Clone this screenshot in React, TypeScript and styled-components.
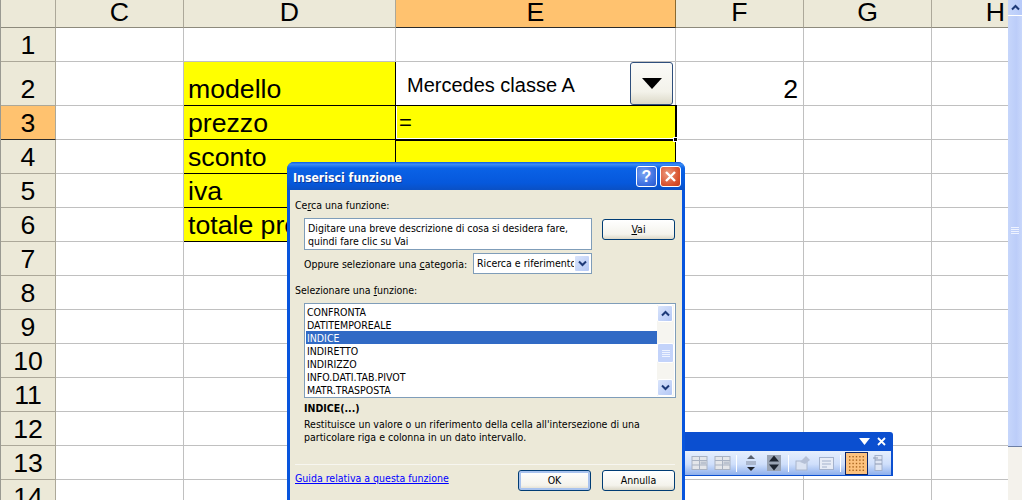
import React from "react";
import styled, { createGlobalStyle } from "styled-components";

const GlobalStyle = createGlobalStyle`
  html, body { margin: 0; padding: 0; background: #fff; overflow: hidden; }
  * { box-sizing: border-box; }
`;

const Page = styled.div`
  position: relative;
  width: 1024px;
  height: 500px;
  overflow: hidden;
  display: flex;
  background: #fff;
  font-family: "Liberation Sans", Arial, sans-serif;
  color: #000;
`;

const Sheet = styled.div`
  width: 1008px;
  height: 500px;
  overflow: hidden;
  display: grid;
  grid-template-columns: 55px 128px 212px 280px 128px 128px 128px;
  grid-template-rows: 28px 34px 44px 34px 34px 34px 34px 34px 34px 34px 34px 34px 34px 34px 34px;
  font-size: 26.67px;
  border-left: 1px solid #9a9a92;
`;

const ColHead = styled.div<{ $active?: boolean }>`
  background: ${(p) => (p.$active ? "#ffc26f" : "#ece9d8")};
  border-right: 1px solid ${(p) => (p.$active ? "#8a6a30" : "#aca899")};
  border-bottom: 1px solid ${(p) => (p.$active ? "#2b2b2b" : "#8d8a7c")};
  display: flex;
  align-items: center;
  justify-content: center;
  line-height: 24px;
  padding-bottom: 3px;
`;

const RowHead = styled.div<{ $active?: boolean }>`
  background: ${(p) => (p.$active ? "#ffc26f" : "#ece9d8")};
  border-right: 1px solid #aca899;
  border-bottom: 1px solid ${(p) => (p.$active ? "#2b2b2b" : "#aca899")};
  display: flex;
  align-items: ${(p) => (p.$active ? "center" : "flex-end")};
  justify-content: center;
  line-height: 32px;
`;

const Cell = styled.div<{ $yellow?: boolean; $right?: boolean }>`
  position: relative;
  background: ${(p) => (p.$yellow ? "#ffff00" : "#fff")};
  border-right: 1px solid ${(p) => (p.$yellow ? "#000" : "#c0c0c0")};
  border-bottom: 1px solid ${(p) => (p.$yellow ? "#000" : "#c0c0c0")};
  display: flex;
  align-items: flex-end;
  justify-content: ${(p) => (p.$right ? "flex-end" : "flex-start")};
  padding: 0 5px 0 4px;
  line-height: 31px;
  white-space: nowrap;
`;

const SelectedCell = styled(Cell)`
  outline: 1px solid #000;
  outline-offset: 0;
  box-shadow: inset 1px 0 0 #fff, inset 0 -1px 0 #fff;
  align-items: center;
  font-size: 22px;
  z-index: 1;
  padding-left: 3px;
`;

const Handle = styled.span`
  position: absolute;
  right: -3px;
  bottom: -3px;
  width: 5px;
  height: 5px;
  background: #000;
  border: 1px solid #fff;
`;

const ComboCell = styled(Cell)`
  font-size: 20px;
  line-height: 24px;
  align-items: center;
  padding: 2px 2px 0 11px;
  justify-content: space-between;
`;

const ComboButton = styled.div`
  width: 43px;
  height: 43px;
  margin-top: -3px;
  border: 1px solid #2f4f7c;
  border-radius: 3px;
  background: linear-gradient(180deg, #fbfbf8 0%, #f3f2ea 70%, #dcd9c8 100%);
  display: flex;
  align-items: center;
  justify-content: center;
`;

const VBar = styled.div`
  width: 14px;
  height: 500px;
  display: flex;
  flex-direction: column;
  margin-right: 2px;
  background: #f4f2ec;
`;

const VBarArrow = styled.div`
  height: 16px;
  background: linear-gradient(90deg, #c5d6fb, #b7cafa);
  border-bottom: 1px solid #fff;
  display: flex;
  align-items: center;
  justify-content: center;
`;

const VBarThumb = styled.div`
  height: 431px;
  background: linear-gradient(90deg, #c6d6fb, #bccdf9 60%, #c8d7fb);
  border-bottom: 1px solid #6d7fa5;
  display: flex;
  flex-direction: column;
  align-items: center;
  padding-top: 211px;
  gap: 1px;
`;

const GripLine = styled.span`
  width: 8px;
  height: 1px;
  background: #eef3ff;
`;

const Dialog = styled.div`
  position: absolute;
  left: 287px;
  top: 162px;
  width: 398px;
  height: 345px;
  background: #0855dd;
  border-radius: 7px 7px 0 0;
  padding: 0 3px 3px;
  display: flex;
  flex-direction: column;
  font-family: "DejaVu Sans Condensed", "DejaVu Sans", sans-serif;
  font-stretch: condensed;
  font-size: 10.5px;
  line-height: 13px;
  z-index: 5;
`;

const TitleBar = styled.div`
  height: 28px;
  margin: 0 -3px;
  padding: 0 4px 0 6px;
  border-radius: 7px 7px 0 0;
  background: linear-gradient(180deg, #0a5ae0 0%, #3b8cf5 8%, #0a62e6 22%, #0658dc 75%, #0a50c4 100%);
  display: flex;
  align-items: center;
  justify-content: space-between;
`;

const TitleText = styled.span`
  color: #fff;
  font-weight: 700;
  font-size: 12.2px;
  padding-top: 5px;
  text-shadow: 1px 1px 0 #0a3a9a;
`;

const TitleButtons = styled.div`
  display: flex;
  gap: 3px;
  padding-top: 1px;
`;

const CaptionButton = styled.div<{ $close?: boolean }>`
  width: 21px;
  height: 21px;
  border: 1px solid #fff;
  border-radius: 3px;
  background: ${(p) =>
    p.$close
      ? "radial-gradient(circle at 35% 35%, #ec9a80, #d9532f 65%, #c23c1c)"
      : "radial-gradient(circle at 35% 35%, #7aa4f2, #3b6ee0 65%, #2a58cc)"};
  color: #fff;
  font: 700 16px/19px "Liberation Sans", sans-serif;
  display: flex;
  align-items: center;
  justify-content: center;
`;

const Body = styled.div`
  flex: 1;
  background: #ece9d8;
  padding: 9px 7px 0 5px;
  display: flex;
  flex-direction: column;
`;

const Label = styled.div`
  color: #000;
  white-space: nowrap;
`;

const CategoryLabel = styled(Label)`
  padding-top: 2px;
`;

const SearchRow = styled.div`
  display: flex;
  justify-content: space-between;
  margin: 6px 0 0 9px;
`;

const SearchBox = styled.div`
  width: 288px;
  height: 32px;
  background: #fff;
  border: 1px solid #7f9db9;
  padding: 3px 3px;
`;

const XpButton = styled.div<{ $default?: boolean }>`
  width: 73px;
  height: 21px;
  border: 1px solid #003c74;
  border-radius: 3px;
  background: linear-gradient(180deg, #fff 0%, #f4f3ec 75%, #dcd8c8 100%);
  box-shadow: ${(p) => (p.$default ? "inset 0 0 0 2px #a9c3ee" : "none")};
  display: flex;
  align-items: center;
  justify-content: center;
`;

const VaiButton = styled(XpButton)`
  margin-top: 1px;
`;

const CategoryRow = styled.div`
  display: flex;
  align-items: center;
  justify-content: space-between;
  width: 288px;
  margin: 3px 0 0 9px;
`;

const SelectBox = styled.div`
  width: 119px;
  height: 21px;
  background: #fff;
  border: 1px solid #7f9db9;
  padding: 1px;
  display: flex;
  align-items: center;
  justify-content: space-between;
`;

const SelectValue = styled.div`
  flex: 1;
  overflow: hidden;
  white-space: nowrap;
  padding-left: 2px;
`;

const ArrowButton = styled.div`
  width: 16px;
  height: 17px;
  border-radius: 2px;
  background: linear-gradient(135deg, #d9e4fb, #b4c8f6);
  border: 1px solid #fff;
  display: flex;
  align-items: center;
  justify-content: center;
  flex: none;
`;

const SectionLabel = styled(Label)`
  margin-top: 10px;
`;

const ListBox = styled.div`
  margin: 6px 0 0 9px;
  height: 95px;
  width: 372px;
  background: #fff;
  border: 1px solid #7f9db9;
  padding: 1px;
  display: flex;
  justify-content: space-between;
`;

const Items = styled.div`
  width: 351px;
`;

const Item = styled.div<{ $selected?: boolean }>`
  height: 13px;
  padding: 1px 0 0 1px;
  white-space: nowrap;
  background: ${(p) => (p.$selected ? "#316ac5" : "transparent")};
  color: ${(p) => (p.$selected ? "#fff" : "#000")};
`;

const ListScroll = styled.div`
  width: 17px;
  display: flex;
  flex-direction: column;
  background: #f6f5f0;
`;

const ListThumb = styled.div`
  height: 20px;
  margin-top: 21px;
  border: 1px solid #fff;
  border-radius: 2px;
  background: #c3d3fa;
  display: flex;
  flex-direction: column;
  align-items: center;
  justify-content: center;
  gap: 1px;
`;

const ListSpacer = styled.div`
  flex: 1;
`;

const FuncName = styled.div`
  margin: 4px 0 0 9px;
  font-weight: 700;
`;

const FuncDesc = styled.div`
  margin: 3px 0 0 9px;
`;

const Separator = styled.div`
  height: 1px;
  margin-top: 20px;
  background: #d0cdbc;
  border-bottom: 1px solid #f7f6f0;
`;

const Footer = styled.div`
  display: flex;
  align-items: flex-start;
  margin-top: 5px;
`;

const HelpLink = styled.a`
  color: #0000ff;
  text-decoration: underline;
  margin-right: auto;
  padding-top: 2px;
  white-space: nowrap;
`;

const FooterButtons = styled.div`
  display: flex;
  gap: 11px;
`;

const FloatBar = styled.div`
  position: absolute;
  left: 670px;
  top: 432px;
  width: 223px;
  height: 44px;
  background: #0b4fd0;
  border-radius: 3px 3px 0 0;
  padding: 0 2px 1px;
  display: flex;
  flex-direction: column;
  z-index: 3;
`;

const FloatTitle = styled.div`
  height: 19px;
  display: flex;
  align-items: center;
  justify-content: flex-end;
  gap: 7px;
  padding-right: 5px;
`;

const FloatBody = styled.div`
  flex: 1;
  background: linear-gradient(180deg, #e6effd 0%, #cfdffb 55%, #8fb0ec 100%);
  display: flex;
  align-items: center;
  justify-content: flex-end;
  padding-right: 3px;
  gap: 3px;
`;

const ToolSep = styled.span`
  width: 1px;
  height: 17px;
  margin: 0 1px;
  background: #8aa8e0;
  border-right: 1px solid #fff;
`;

const ToolButton = styled.div<{ $on?: boolean }>`
  width: ${(p) => (p.$on ? 23 : 20)}px;
  height: ${(p) => (p.$on ? 23 : 20)}px;
  margin-right: ${(p) => (p.$on ? -3 : 0)}px;
  display: flex;
  align-items: center;
  justify-content: center;
  background: ${(p) => (p.$on ? "#fdc27e" : "transparent")};
  border: ${(p) => (p.$on ? "1px solid #0a246a" : "none")};
`;

const colLetters = ["C", "D", "E", "F", "G", "H"];
const labels: Record<number, string> = { 2: "modello", 3: "prezzo", 4: "sconto", 5: "iva", 6: "totale prezzo" };
const functions = ["CONFRONTA", "DATITEMPOREALE", "INDICE", "INDIRETTO", "INDIRIZZO", "INFO.DATI.TAB.PIVOT", "MATR.TRASPOSTA"];
const rows = Array.from({ length: 14 }, (_, i) => i + 1);

const Chevron = ({ up, color = "#1d3a78" }: { up?: boolean; color?: string }) => (
  <svg width="9" height="7" viewBox="0 0 9 7">
    <path d={up ? "M1 5.5 L4.5 2 L8 5.5" : "M1 1.5 L4.5 5 L8 1.5"} fill="none" stroke={color} strokeWidth="2" />
  </svg>
);

const Grip = () => (
  <>
    <GripLine />
    <GripLine />
    <GripLine />
    <GripLine />
  </>
);

const GhostTable = () => (
  <svg width="17" height="16" viewBox="0 0 17 16">
    <rect x="1" y="1.5" width="15" height="13" fill="#e4e6ea" stroke="#a9b2c2" />
    <path d="M1 5.5H16M1 10H16M8.5 1.5V14.5" stroke="#a9b2c2" fill="none" />
    <rect x="9.5" y="6.5" width="6" height="3" fill="#bcc3d0" />
  </svg>
);

const ToolIcons = () => (
  <>
    <ToolButton><GhostTable /></ToolButton>
    <ToolButton><GhostTable /></ToolButton>
    <ToolSep />
    <ToolButton>
      <svg width="14" height="18" viewBox="0 0 14 18">
        <path d="M7 1 L11 5 H3 Z" fill="#59616e" />
        <rect x="2" y="7" width="10" height="4" fill="#aab6cc" />
        <path d="M7 17 L3 13 H11 Z" fill="#20242c" />
      </svg>
    </ToolButton>
    <ToolButton>
      <svg width="16" height="18" viewBox="0 0 16 18">
        <rect x="1" y="1" width="14" height="16" fill="#9aa4b4" />
        <path d="M8 1.5 L13 7.5 H3 Z" fill="#1d2430" />
        <path d="M8 16.5 L3 10.5 H13 Z" fill="#1d2430" />
      </svg>
    </ToolButton>
    <ToolSep />
    <ToolButton>
      <svg width="18" height="16" viewBox="0 0 18 16">
        <rect x="2" y="6" width="11" height="9" fill="#dbe3f2" stroke="#aab6cc" />
        <path d="M6 7 L12 1 L16 5 L11 9 Z" fill="#b5c0d6" />
      </svg>
    </ToolButton>
    <ToolButton>
      <svg width="17" height="15" viewBox="0 0 17 15">
        <rect x="1.5" y="1.5" width="14" height="12" fill="#e7ecf6" stroke="#a4b2cc" />
        <path d="M4 5H13M4 8H13M4 11H9" stroke="#a4b2cc" />
      </svg>
    </ToolButton>
    <ToolSep />
    <ToolButton $on>
      <svg width="17" height="17" viewBox="0 0 17 17">
        {Array.from({ length: 25 }, (_, i) => (
          <rect key={i} x={1 + (i % 5) * 3.4} y={1 + Math.floor(i / 5) * 3.4} width="1.4" height="1.4" fill="#a8641e" />
        ))}
      </svg>
    </ToolButton>
    <ToolButton>
      <svg width="12" height="18" viewBox="0 0 12 18">
        <rect x="3" y="1.5" width="7" height="15" fill="#dfe6f4" stroke="#a4b2cc" />
        <path d="M3 6H10M3 10H10M1 4 H6" stroke="#8c99b3" fill="none" />
      </svg>
    </ToolButton>
  </>
);

export default function App() {
  return (
    <Page>
      <GlobalStyle />
      <Sheet>
        <ColHead />
        {colLetters.map((c) => (
          <ColHead key={c} $active={c === "E"}>{c}</ColHead>
        ))}
        {rows.map((r) => (
          <React.Fragment key={r}>
            <RowHead $active={r === 3}>{r}</RowHead>
            <Cell />
            <Cell $yellow={r >= 2 && r <= 6}>{labels[r]}</Cell>
            {r === 2 ? (
              <ComboCell>
                Mercedes classe A
                <ComboButton>
                  <svg width="20" height="11" viewBox="0 0 20 11">
                    <path d="M0 0H20L10 11Z" fill="#000" />
                  </svg>
                </ComboButton>
              </ComboCell>
            ) : r === 3 ? (
              <SelectedCell $yellow>
                =<Handle />
              </SelectedCell>
            ) : (
              <Cell $yellow={r >= 4 && r <= 6} />
            )}
            <Cell $right>{r === 2 ? "2" : ""}</Cell>
            <Cell />
            <Cell />
          </React.Fragment>
        ))}
      </Sheet>
      <VBar>
        <VBarArrow><Chevron up /></VBarArrow>
        <VBarThumb><Grip /></VBarThumb>
      </VBar>

      <FloatBar>
        <FloatTitle>
          <svg width="11" height="7" viewBox="0 0 11 7"><path d="M0 0H11L5.5 7Z" fill="#fff" /></svg>
          <svg width="9" height="9" viewBox="0 0 9 9"><path d="M1 1L8 8M8 1L1 8" stroke="#fff" strokeWidth="1.8" /></svg>
        </FloatTitle>
        <FloatBody><ToolIcons /></FloatBody>
      </FloatBar>

      <Dialog>
        <TitleBar>
          <TitleText>Inserisci funzione</TitleText>
          <TitleButtons>
            <CaptionButton>?</CaptionButton>
            <CaptionButton $close>
              <svg width="13" height="13" viewBox="0 0 13 13"><path d="M2 2L11 11M11 2L2 11" stroke="#fff" strokeWidth="2.4" /></svg>
            </CaptionButton>
          </TitleButtons>
        </TitleBar>
        <Body>
          <Label>Ce<u>r</u>ca una funzione:</Label>
          <SearchRow>
            <SearchBox>
              Digitare una breve descrizione di cosa si desidera fare,
              <br />
              quindi fare clic su Vai
            </SearchBox>
            <VaiButton><span><u>V</u>ai</span></VaiButton>
          </SearchRow>
          <CategoryRow>
            <CategoryLabel>Oppure selezionare una <u>c</u>ategoria:</CategoryLabel>
            <SelectBox>
              <SelectValue>Ricerca e riferimento</SelectValue>
              <ArrowButton><Chevron /></ArrowButton>
            </SelectBox>
          </CategoryRow>
          <SectionLabel>Selezionare una <u>f</u>unzione:</SectionLabel>
          <ListBox>
            <Items>
              {functions.map((f) => (
                <Item key={f} $selected={f === "INDICE"}>{f}</Item>
              ))}
            </Items>
            <ListScroll>
              <ArrowButton><Chevron up /></ArrowButton>
              <ListThumb><Grip /></ListThumb>
              <ListSpacer />
              <ArrowButton><Chevron /></ArrowButton>
            </ListScroll>
          </ListBox>
          <FuncName>INDICE(...)</FuncName>
          <FuncDesc>
            Restituisce un valore o un riferimento della cella all'intersezione di una
            <br />
            particolare riga e colonna in un dato intervallo.
          </FuncDesc>
          <Separator />
          <Footer>
            <HelpLink>Guida relativa a questa funzione</HelpLink>
            <FooterButtons>
              <XpButton $default>OK</XpButton>
              <XpButton>Annulla</XpButton>
            </FooterButtons>
          </Footer>
        </Body>
      </Dialog>
    </Page>
  );
}
